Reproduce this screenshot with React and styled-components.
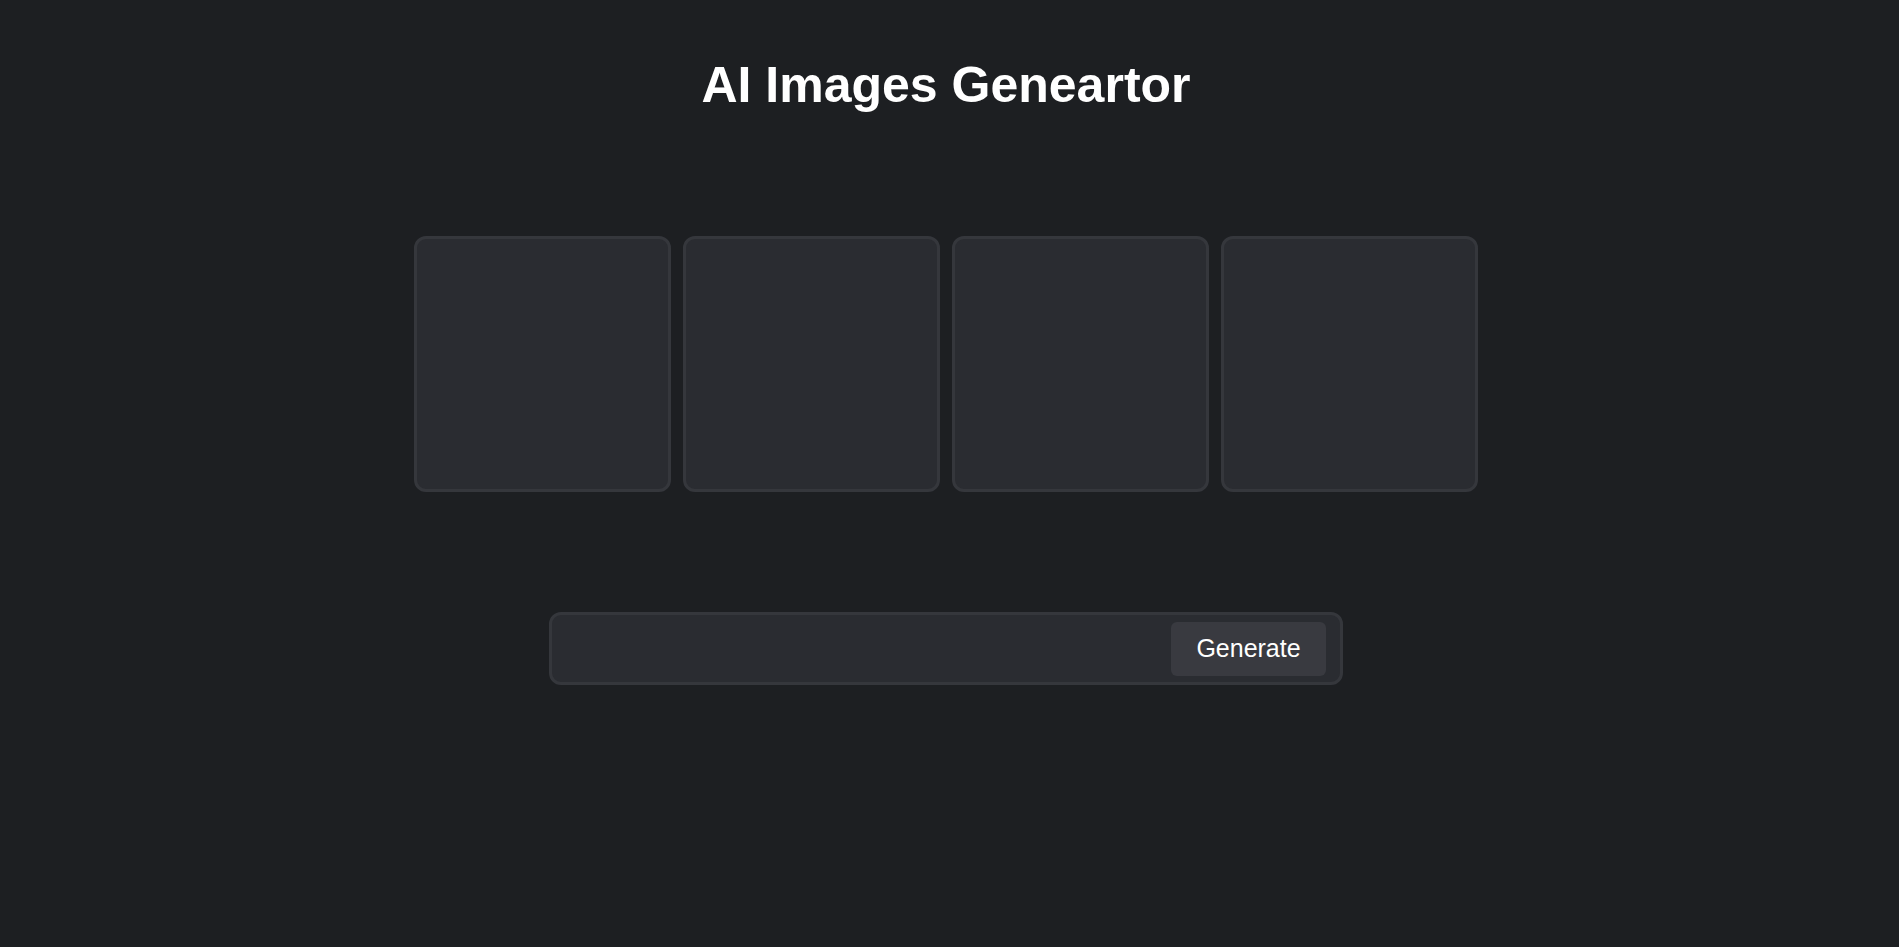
import React, { useState } from "react";
import styled, { createGlobalStyle } from "styled-components";

const GlobalStyle = createGlobalStyle`
  html, body {
    margin: 0;
    padding: 0;
    background: #1d1f22;
  }
  body {
    font-family: "Liberation Sans", Arial, sans-serif;
    color: #ffffff;
  }
`;

const Page = styled.div`
  min-height: 100vh;
  box-sizing: border-box;
  padding: 57px 7px 0 0;
  display: flex;
  flex-direction: column;
  align-items: center;
`;

const Title = styled.h1`
  margin: 0;
  font-size: 50px;
  font-weight: 700;
  line-height: 57px;
  color: #ffffff;
`;

const Gallery = styled.div`
  margin-top: 122px;
  display: grid;
  grid-template-columns: repeat(4, 256.5px);
  gap: 12.5px;
`;

const ImageBox = styled.div`
  box-sizing: border-box;
  width: 100%;
  height: 256px;
  background: #2a2c31;
  border: 3px solid #35373c;
  border-radius: 12px;
`;

const PromptBar = styled.form`
  box-sizing: border-box;
  margin-top: 120px;
  width: 794px;
  height: 73px;
  display: flex;
  align-items: center;
  gap: 12px;
  padding: 0 14px 0 12px;
  background: #2a2c31;
  border: 3px solid #35373c;
  border-radius: 12px;
`;

const PromptInput = styled.input`
  flex: 1;
  height: 100%;
  background: transparent;
  border: none;
  outline: none;
  color: #ffffff;
  font-family: inherit;
  font-size: 22px;
`;

const GenerateButton = styled.button`
  width: 155px;
  height: 54px;
  border: none;
  border-radius: 6px;
  background: #393a40;
  color: #ffffff;
  font-family: inherit;
  font-size: 25px;
  cursor: pointer;
`;

const App = () => {
  const [prompt, setPrompt] = useState("");

  return (
    <>
      <GlobalStyle />
      <Page>
        <Title>AI Images Geneartor</Title>
        <Gallery>
          {[0, 1, 2, 3].map((i) => (
            <ImageBox key={i} />
          ))}
        </Gallery>
        <PromptBar onSubmit={(e) => e.preventDefault()}>
          <PromptInput value={prompt} onChange={(e) => setPrompt(e.target.value)} />
          <GenerateButton type="submit">Generate</GenerateButton>
        </PromptBar>
      </Page>
    </>
  );
};

export default App;
